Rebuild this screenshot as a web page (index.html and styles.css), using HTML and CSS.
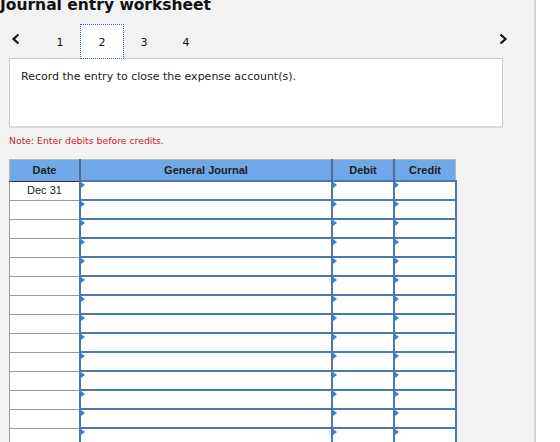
FILE: index.html
```html
<!DOCTYPE html>
<html lang="en">
<head>
<meta charset="utf-8">
<title>Journal entry worksheet</title>
<link rel="stylesheet" href="styles.css">
</head>
<body>
<div class="panel">
  <h1 class="title">Journal entry worksheet</h1>

  <div class="tabs">
    <button class="nav nav-prev" aria-label="Previous">
      <svg width="10" height="12" viewBox="0 0 10 12"><path d="M7.5 1.5 L2.5 6 L7.5 10.5" fill="none" stroke="#111" stroke-width="2.2"/></svg>
    </button>
    <span class="tab">1</span>
    <span class="tab tab-active">2</span>
    <span class="tab">3</span>
    <span class="tab">4</span>
    <button class="nav nav-next" aria-label="Next">
      <svg width="10" height="12" viewBox="0 0 10 12"><path d="M2.5 1.5 L7.5 6 L2.5 10.5" fill="none" stroke="#111" stroke-width="2.2"/></svg>
    </button>
  </div>

  <div class="prompt">Record the entry to close the expense account(s).</div>

  <p class="note">Note: Enter debits before credits.</p>

  <table class="journal">
    <thead>
      <tr>
        <th class="c-date">Date</th>
        <th class="c-acct">General Journal</th>
        <th class="c-amt">Debit</th>
        <th class="c-amt">Credit</th>
      </tr>
    </thead>
    <tbody>
      <tr><td class="date">Dec 31</td><td class="inp"></td><td class="inp"></td><td class="inp"></td></tr>
      <tr><td class="date"></td><td class="inp"></td><td class="inp"></td><td class="inp"></td></tr>
      <tr><td class="date"></td><td class="inp"></td><td class="inp"></td><td class="inp"></td></tr>
      <tr><td class="date"></td><td class="inp"></td><td class="inp"></td><td class="inp"></td></tr>
      <tr><td class="date"></td><td class="inp"></td><td class="inp"></td><td class="inp"></td></tr>
      <tr><td class="date"></td><td class="inp"></td><td class="inp"></td><td class="inp"></td></tr>
      <tr><td class="date"></td><td class="inp"></td><td class="inp"></td><td class="inp"></td></tr>
      <tr><td class="date"></td><td class="inp"></td><td class="inp"></td><td class="inp"></td></tr>
      <tr><td class="date"></td><td class="inp"></td><td class="inp"></td><td class="inp"></td></tr>
      <tr><td class="date"></td><td class="inp"></td><td class="inp"></td><td class="inp"></td></tr>
      <tr><td class="date"></td><td class="inp"></td><td class="inp"></td><td class="inp"></td></tr>
      <tr><td class="date"></td><td class="inp"></td><td class="inp"></td><td class="inp"></td></tr>
      <tr><td class="date"></td><td class="inp"></td><td class="inp"></td><td class="inp"></td></tr>
      <tr><td class="date"></td><td class="inp"></td><td class="inp"></td><td class="inp"></td></tr>
      <tr><td class="date"></td><td class="inp"></td><td class="inp"></td><td class="inp"></td></tr>
    </tbody>
  </table>
</div>
</body>
</html>
```
FILE: styles.css
```css
html, body {
  margin: 0;
  padding: 0;
  background: #ffffff;
  overflow: hidden;
}

.panel {
  box-sizing: border-box;
  width: 536px;
  height: 442px;
  background: #f2f2f2;
  border-right: 2px solid #d3d3d3;
  overflow: hidden;
}

.title {
  margin: -4px 0 0 0;
  font-family: "DejaVu Sans", Verdana, sans-serif;
  font-weight: bold;
  font-size: 15.5px;
  line-height: 18px;
  color: #111;
}

.tabs {
  display: flex;
  align-items: center;
  height: 34px;
  margin-top: 10px;
  font-family: "DejaVu Sans", Verdana, sans-serif;
  font-size: 11px;
  color: #111;
}

.nav {
  display: flex;
  align-items: center;
  justify-content: center;
  border: 0;
  padding: 0;
  background: none;
  height: 34px;
}

.nav-prev {
  width: 32px;
  margin-right: 7px;
  padding-bottom: 4px;
}

.nav-next {
  width: 16px;
  margin-left: auto;
  margin-right: 23px;
  padding-bottom: 4px;
}

.tab {
  box-sizing: border-box;
  width: 42px;
  height: 34px;
  display: flex;
  align-items: center;
  justify-content: center;
  padding-top: 2px;
}

.tab-active {
  align-self: flex-start;
  height: 35px;
  width: 44px;
  margin: 0 -1px;
  background: #fff;
  border: 1px dotted #2f64c0;
  position: relative;
  z-index: 1;
}

.prompt {
  box-sizing: border-box;
  margin-left: 9px;
  width: 494px;
  height: 70px;
  padding: 11px 0 0 11px;
  background: #fff;
  border: 1px solid #c9c9c9;
  border-bottom: 2px solid #d9d9d9;
  font-family: "DejaVu Sans", Verdana, sans-serif;
  font-size: 11px;
  line-height: 14px;
  color: #222;
}

.note {
  margin: 6px 0 0 9px;
  font-family: "DejaVu Sans", Verdana, sans-serif;
  font-size: 9.3px;
  line-height: 14px;
  color: #c4262e;
}

.journal {
  margin: 11px 0 0 9px;
  border-collapse: collapse;
  table-layout: fixed;
  font-family: "Liberation Sans", Arial, sans-serif;
  font-size: 11px;
  color: #222;
}

.journal th {
  height: 20px;
  padding: 0;
  background: #6fa8e8;
  border-top: 1px solid #b7b7b7;
  border-bottom: 1px solid #2f3640;
  border-left: 2px solid #4e6c92;
  font-weight: bold;
  color: #1d1d1d;
  text-align: center;
}

.journal th:first-child {
  border-left: 1px solid #b7b7b7;
}

.journal th:last-child {
  border-right: 1px solid #b7b7b7;
}

.c-date { width: 69px; }
.c-acct { width: 250px; }
.c-amt { width: 60px; }

.journal td {
  height: 17px;
  padding: 0;
  background: #fff;
}

.date {
  border: 1px solid #9a9a9a;
  text-align: center;
  vertical-align: top;
  line-height: 17px;
}

.inp {
  position: relative;
  border: 2px solid #4b78b2;
}

/* small flag marking the start of each entry field */
.inp::before {
  content: "";
  position: absolute;
  left: 0;
  top: 0;
  border-left: 4px solid #3d7fd6;
  border-top: 3px solid transparent;
  border-bottom: 3px solid transparent;
}
```
